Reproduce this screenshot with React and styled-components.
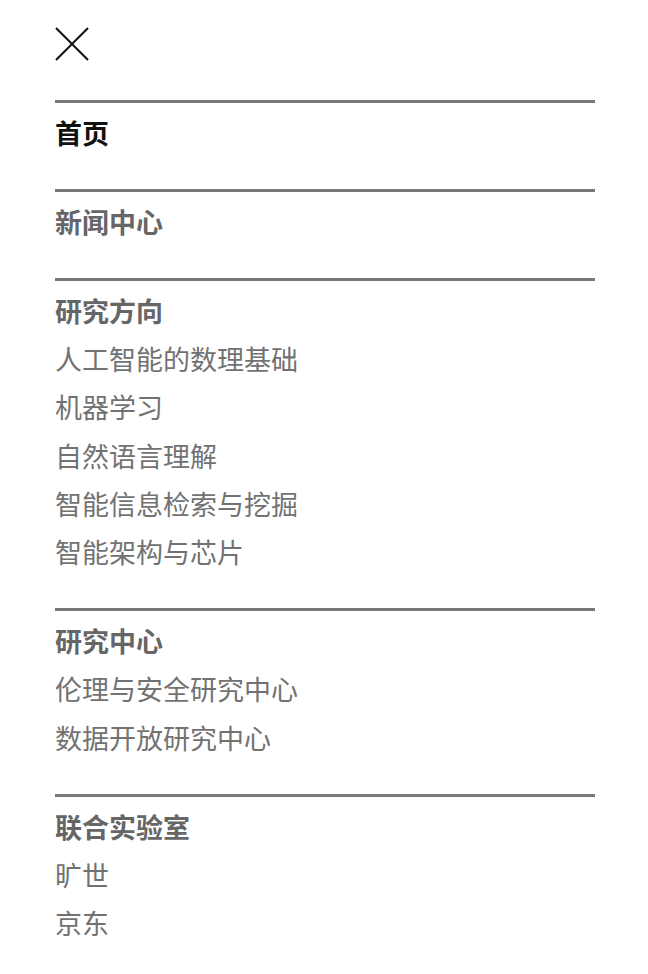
import React from "react";
import styled, { createGlobalStyle } from "styled-components";

const GlobalStyle = createGlobalStyle`
  html, body {
    margin: 0;
    padding: 0;
    background: #fff;
  }
  body {
    font-family: "Noto Sans CJK SC", "Noto Sans", sans-serif;
  }
`;

const Page = styled.div`
  width: 648px;
  min-height: 974px;
  box-sizing: border-box;
  padding: 0 53px 0 55px;
  background: #fff;
`;

const TopBar = styled.div`
  height: 100px;
  display: flex;
  align-items: flex-start;
`;

const CloseButton = styled.button`
  margin-top: 27px;
  padding: 0;
  border: none;
  background: none;
  width: 34px;
  height: 34px;
  cursor: pointer;
  display: flex;
`;

const Section = styled.section`
  border-top: 3px solid #787878;
  padding: 6px 0 32px;
  display: flex;
  flex-direction: column;
`;

const Heading = styled.a`
  font-size: 27px;
  line-height: 48px;
  font-weight: 700;
  color: ${(p) => (p.$active ? "#111" : "#666")};
  text-decoration: none;
`;

const Item = styled.a`
  font-size: 27px;
  line-height: 48.3px;
  font-weight: 400;
  color: #727272;
  text-decoration: none;
`;

const menu = [
  { title: "首页", active: true, items: [] },
  { title: "新闻中心", items: [] },
  {
    title: "研究方向",
    items: [
      "人工智能的数理基础",
      "机器学习",
      "自然语言理解",
      "智能信息检索与挖掘",
      "智能架构与芯片",
    ],
  },
  { title: "研究中心", items: ["伦理与安全研究中心", "数据开放研究中心"] },
  { title: "联合实验室", items: ["旷世", "京东"] },
];

const App = () => {
  return (
    <>
      <GlobalStyle />
      <Page>
        <TopBar>
          <CloseButton aria-label="关闭">
            <svg width="34" height="34" viewBox="0 0 34 34">
              <path
                d="M1 1 L33 33 M33 1 L1 33"
                stroke="#111"
                strokeWidth="2"
                fill="none"
              />
            </svg>
          </CloseButton>
        </TopBar>
        {menu.map((sec) => (
          <Section key={sec.title}>
            <Heading $active={sec.active}>{sec.title}</Heading>
            {sec.items.map((it) => (
              <Item key={it}>{it}</Item>
            ))}
          </Section>
        ))}
      </Page>
    </>
  );
};

export default App;
